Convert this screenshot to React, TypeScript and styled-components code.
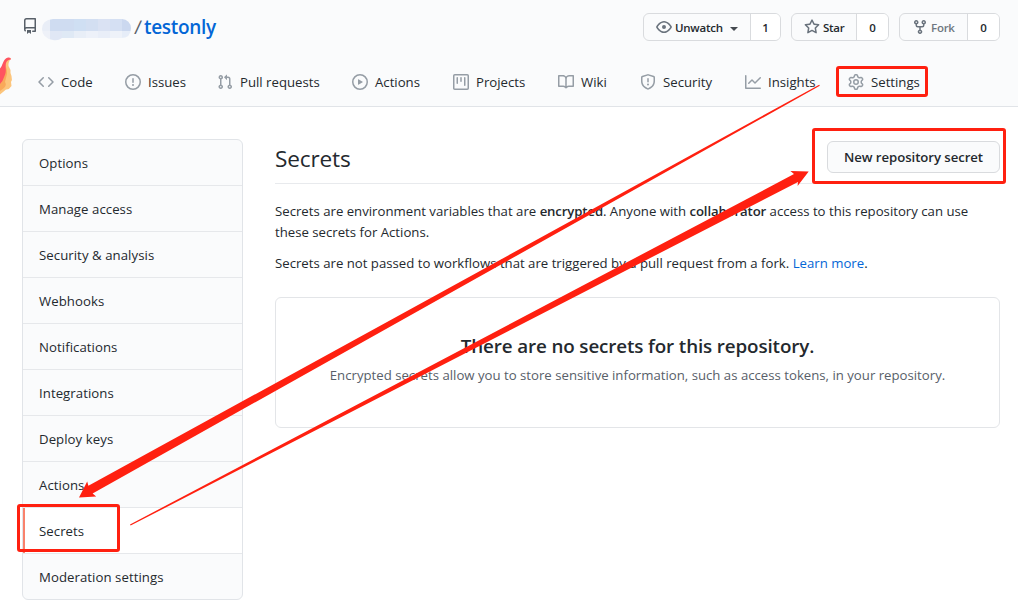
import React from "react";
import styled, { createGlobalStyle, css } from "styled-components";

const RED = "#ff2010";

const GlobalStyle = createGlobalStyle`
  * { box-sizing: border-box; }
  html, body { margin: 0; padding: 0; background: #fff; }
  body {
    font-family: "Open Sans", "Noto Sans", sans-serif;
    font-size: 13.2px;
    line-height: 21px;
    color: #24292e;
    overflow: hidden;
  }
`;

const icons = {
  repo: "M2 2.5A2.5 2.5 0 014.5 0h8.75a.75.75 0 01.75.75v12.5a.75.75 0 01-.75.75h-2.5a.75.75 0 110-1.5h1.75v-2h-8a1 1 0 00-.714 1.7.75.75 0 01-1.072 1.05A2.495 2.495 0 012 11.5v-9zm10.5-1V9h-8c-.356 0-.694.074-1 .208V2.5a1 1 0 011-1h8zM5 12.25v3.25a.25.25 0 00.4.2l1.45-1.087a.25.25 0 01.3 0L8.6 15.7a.25.25 0 00.4-.2v-3.25a.25.25 0 00-.25-.25h-3.5a.25.25 0 00-.25.25z",
  code: "M4.72 3.22a.75.75 0 011.06 1.06L2.06 8l3.72 3.72a.75.75 0 11-1.06 1.06L.47 8.53a.75.75 0 010-1.06l4.25-4.25zm6.56 0a.75.75 0 10-1.06 1.06L13.94 8l-3.72 3.72a.75.75 0 101.06 1.06l4.25-4.25a.75.75 0 000-1.06l-4.25-4.25z",
  issue: "M8 1.5a6.5 6.5 0 100 13 6.5 6.5 0 000-13zM0 8a8 8 0 1116 0A8 8 0 010 8zm9 3a1 1 0 11-2 0 1 1 0 012 0zm-.25-6.25a.75.75 0 00-1.5 0v3.5a.75.75 0 001.5 0v-3.5z",
  pull: "M7.177 3.073L9.573.677A.25.25 0 0110 .854v4.792a.25.25 0 01-.427.177L7.177 3.427a.25.25 0 010-.354zM3.75 2.5a.75.75 0 100 1.5.75.75 0 000-1.5zm-2.25.75a2.25 2.25 0 113 2.122v5.256a2.251 2.251 0 11-1.5 0V5.372A2.25 2.25 0 011.5 3.25zM11 2.5h-1V4h1a1 1 0 011 1v5.628a2.251 2.251 0 101.5 0V5A2.5 2.5 0 0011 2.5zm1 10.25a.75.75 0 111.5 0 .75.75 0 01-1.5 0zM3.75 12a.75.75 0 100 1.5.75.75 0 000-1.5z",
  play: "M1.5 8a6.5 6.5 0 1113 0 6.5 6.5 0 01-13 0zM8 0a8 8 0 100 16A8 8 0 008 0zM6.379 5.227A.25.25 0 006 5.442v5.117a.25.25 0 00.379.214l4.264-2.559a.25.25 0 000-.428L6.379 5.227z",
  project: "M1.75 0A1.75 1.75 0 000 1.75v12.5C0 15.216.784 16 1.75 16h12.5A1.75 1.75 0 0016 14.25V1.75A1.75 1.75 0 0014.25 0H1.75zM1.5 1.75a.25.25 0 01.25-.25h12.5a.25.25 0 01.25.25v12.5a.25.25 0 01-.25.25H1.75a.25.25 0 01-.25-.25V1.75zM11.75 3a.75.75 0 00-.75.75v7.5a.75.75 0 001.5 0v-7.5a.75.75 0 00-.75-.75zm-8.25.75a.75.75 0 011.5 0v5.5a.75.75 0 01-1.5 0v-5.5zM8 3a.75.75 0 00-.75.75v3.5a.75.75 0 001.5 0v-3.5A.75.75 0 008 3z",
  book: "M0 1.75A.75.75 0 01.75 1h4.253c1.227 0 2.317.59 3 1.501A3.744 3.744 0 0111.006 1h4.245a.75.75 0 01.75.75v10.5a.75.75 0 01-.75.75h-4.507a2.25 2.25 0 00-1.591.659l-.622.621a.75.75 0 01-1.06 0l-.622-.621A2.25 2.25 0 005.258 13H.75a.75.75 0 01-.75-.75V1.75zm8.755 3a2.25 2.25 0 012.25-2.25H14.5v9h-3.757c-.71 0-1.4.201-1.992.572l.004-7.322zm-1.504 7.324l.004-5.073-.002-2.253A2.25 2.25 0 005.003 2.5H1.5v9h3.757a3.75 3.75 0 011.994.574z",
  shield: "M7.467.133a1.75 1.75 0 011.066 0l5.25 1.68A1.75 1.75 0 0115 3.48V7c0 1.566-.32 3.182-1.303 4.682-.983 1.498-2.585 2.813-5.032 3.855a1.7 1.7 0 01-1.33 0c-2.447-1.042-4.049-2.357-5.032-3.855C1.32 10.182 1 8.566 1 7V3.48a1.75 1.75 0 011.217-1.667l5.25-1.68zm.61 1.429a.25.25 0 00-.153 0l-5.25 1.68a.25.25 0 00-.174.238V7c0 1.358.275 2.666 1.057 3.86.784 1.194 2.121 2.34 4.366 3.297a.2.2 0 00.154 0c2.245-.956 3.582-2.104 4.366-3.298C13.225 9.666 13.5 8.36 13.5 7V3.48a.25.25 0 00-.174-.237l-5.25-1.68zM9 10.5a1 1 0 11-2 0 1 1 0 012 0zm-.25-5.75a.75.75 0 10-1.5 0v3a.75.75 0 001.5 0v-3z",
  graph: "M1.5 1.75a.75.75 0 00-1.5 0v12.5c0 .414.336.75.75.75h14.5a.75.75 0 000-1.5H1.5V1.75zm14.28 2.53a.75.75 0 00-1.06-1.06L10 7.94 7.53 5.47a.75.75 0 00-1.06 0L3.22 8.72a.75.75 0 001.06 1.06L7 7.06l2.47 2.47a.75.75 0 001.06 0l5.25-5.25z",
  gear: "M7.429 1.525a6.593 6.593 0 011.142 0c.036.003.108.036.137.146l.289 1.105c.147.56.55.967.997 1.189.174.086.341.183.501.29.417.278.97.423 1.53.27l1.102-.303c.11-.03.175.016.195.046.219.31.41.641.573.989.014.031.022.11-.059.19l-.815.806c-.411.406-.562.957-.53 1.456a4.588 4.588 0 010 .582c-.032.499.119 1.05.53 1.456l.815.806c.08.08.073.159.059.19a6.494 6.494 0 01-.573.99c-.02.029-.086.074-.195.045l-1.103-.303c-.559-.153-1.112-.008-1.529.27-.16.107-.327.204-.5.29-.449.222-.851.628-.998 1.189l-.289 1.105c-.029.11-.101.143-.137.146a6.613 6.613 0 01-1.142 0c-.036-.003-.108-.037-.137-.146l-.289-1.105c-.147-.56-.55-.967-.997-1.189a4.502 4.502 0 01-.501-.29c-.417-.278-.97-.423-1.53-.27l-1.102.303c-.11.03-.175-.016-.195-.046a6.492 6.492 0 01-.573-.989c-.014-.031-.022-.11.059-.19l.815-.806c.411-.406.562-.957.53-1.456a4.587 4.587 0 010-.582c.032-.499-.119-1.05-.53-1.456l-.815-.806c-.08-.08-.073-.159-.059-.19a6.44 6.44 0 01.573-.99c.02-.029.086-.075.195-.045l1.103.303c.559.153 1.112.008 1.529-.27.16-.107.327-.204.5-.29.449-.222.851-.628.998-1.189l.289-1.105c.029-.11.101-.143.137-.146zM8 0c-.236 0-.47.01-.701.03-.743.065-1.29.615-1.458 1.261l-.29 1.106c-.017.066-.078.158-.211.224a5.994 5.994 0 00-.668.386c-.123.082-.233.09-.3.071L3.27 2.776c-.644-.177-1.392.02-1.82.63a7.977 7.977 0 00-.704 1.217c-.315.675-.111 1.422.363 1.891l.815.806c.05.048.098.147.088.294a6.084 6.084 0 000 .772c.01.147-.038.246-.088.294l-.815.806c-.474.469-.678 1.216-.363 1.891.2.428.436.835.704 1.218.428.609 1.176.806 1.82.63l1.103-.303c.066-.019.176-.011.299.071.213.143.436.272.668.386.133.066.194.158.212.224l.289 1.106c.169.646.715 1.196 1.458 1.26a8.094 8.094 0 001.402 0c.743-.064 1.29-.614 1.458-1.26l.29-1.106c.017-.066.078-.158.211-.224a5.98 5.98 0 00.668-.386c.123-.082.233-.09.3-.071l1.102.302c.644.177 1.392-.02 1.82-.63.268-.382.505-.789.704-1.217.315-.675.111-1.422-.364-1.891l-.814-.806c-.05-.048-.098-.147-.088-.294a6.1 6.1 0 000-.772c-.01-.147.039-.246.088-.294l.814-.806c.475-.469.679-1.216.364-1.891a7.992 7.992 0 00-.704-1.218c-.428-.609-1.176-.806-1.82-.63l-1.103.303c-.066.019-.176.011-.299-.071a5.991 5.991 0 00-.668-.386c-.133-.066-.194-.158-.212-.224L10.16 1.29C9.99.645 9.444.095 8.701.031A8.094 8.094 0 008 0zm1.5 8a1.5 1.5 0 11-3 0 1.5 1.5 0 013 0zM11 8a3 3 0 11-6 0 3 3 0 016 0z",
  eye: "M1.679 7.932c.412-.621 1.242-1.75 2.366-2.717C5.175 4.242 6.527 3.5 8 3.5c1.473 0 2.824.742 3.955 1.715 1.124.967 1.954 2.096 2.366 2.717a.119.119 0 010 .136c-.412.621-1.242 1.75-2.366 2.717C10.825 11.758 9.473 12.5 8 12.5c-1.473 0-2.824-.742-3.955-1.715C2.92 9.818 2.09 8.69 1.679 8.068a.119.119 0 010-.136zM8 2c-1.981 0-3.67.992-4.933 2.078C1.797 5.169.88 6.423.43 7.1a1.619 1.619 0 000 1.798c.45.678 1.367 1.932 2.637 3.024C4.329 13.008 6.019 14 8 14c1.981 0 3.67-.992 4.933-2.078 1.27-1.091 2.187-2.345 2.637-3.023a1.619 1.619 0 000-1.798c-.45-.678-1.367-1.932-2.637-3.023C11.671 2.992 9.981 2 8 2zm0 8a2 2 0 100-4 2 2 0 000 4z",
  star: "M8 .25a.75.75 0 01.673.418l1.882 3.815 4.21.612a.75.75 0 01.416 1.279l-3.046 2.97.719 4.192a.75.75 0 01-1.088.791L8 12.347l-3.766 1.98a.75.75 0 01-1.088-.79l.72-4.194L.818 6.374a.75.75 0 01.416-1.28l4.21-.611L7.327.668A.75.75 0 018 .25zm0 2.445L6.615 5.5a.75.75 0 01-.564.41l-3.097.45 2.24 2.184a.75.75 0 01.216.664l-.528 3.084 2.769-1.456a.75.75 0 01.698 0l2.77 1.456-.53-3.084a.75.75 0 01.216-.664l2.24-2.183-3.096-.45a.75.75 0 01-.564-.41L8 2.694v.001z",
  fork: "M5 3.25a.75.75 0 11-1.5 0 .75.75 0 011.5 0zm0 2.122a2.25 2.25 0 10-1.5 0v.878A2.25 2.25 0 005.75 8.5h1.5v2.128a2.251 2.251 0 101.5 0V8.5h1.5a2.25 2.25 0 002.25-2.25v-.878a2.25 2.25 0 10-1.5 0v.878a.75.75 0 01-.75.75h-4.5A.75.75 0 015 6.25v-.878zm3.75 7.378a.75.75 0 11-1.5 0 .75.75 0 011.5 0zm3-8.75a.75.75 0 100-1.5.75.75 0 000 1.5z",
};

type IconName = keyof typeof icons;

const IconSvg = styled.svg<{ $color: string }>`
  display: block;
  flex: none;
  width: 16px;
  height: 16px;
  fill: ${(p) => p.$color};
`;

const Icon = ({ name, color = "#959da5" }: { name: IconName; color?: string }) => (
  <IconSvg viewBox="0 0 16 16" $color={color}>
    <path fillRule="evenodd" d={icons[name]} />
  </IconSvg>
);

const Page = styled.div`
  position: relative;
  width: 1018px;
  height: 612px;
  overflow: hidden;
  background: #fff;
`;

const Header = styled.header`
  height: 107px;
  background: #fafbfc;
  border-bottom: 1px solid #e1e4e8;
`;

const TitleRow = styled.div`
  display: flex;
  justify-content: space-between;
  height: 58px;
  padding: 13px 18px 0 22px;
`;

const RepoTitle = styled.h1`
  display: flex;
  align-items: flex-start;
  margin: 0;
  padding-top: 5px;
  font-size: 19px;
  font-weight: 400;
  line-height: 19px;
`;

const MaskedOwner = styled.svg`
  display: block;
  width: 92px;
  height: 24px;
  margin: 0 0 0 4px;
`;

const Slash = styled.span`
  width: 10px;
  margin-left: -1.5px;
  margin-right: 1.5px;
  color: #586069;
  text-align: center;
  transform: skewX(-5deg);
`;

const RepoName = styled.a`
  color: #0366d6;
  font-weight: 600;
  letter-spacing: -0.3px;
`;

const Actions = styled.div`
  display: flex;
  gap: 10px;
`;

const ButtonGroup = styled.div<{ $width: number }>`
  display: flex;
  width: ${(p) => p.$width}px;
  height: 28px;
  border: 1px solid #d9dbde;
  border-radius: 6px;
  background: #fafbfc;
  overflow: hidden;
  font-size: 11.5px;
  font-weight: 600;
`;

const SocialButton = styled.div<{ $muted?: boolean }>`
  display: flex;
  flex: 1;
  align-items: center;
  gap: 3px;
  padding-left: 12px;
  color: ${(p) => (p.$muted ? "#6f7780" : "#24292e")};
  letter-spacing: -0.25px;
`;

const Count = styled.div<{ $width: number }>`
  display: flex;
  align-items: center;
  justify-content: center;
  width: ${(p) => p.$width}px;
  border-left: 1px solid #d9dbde;
  background: #fff;
`;

const Caret = styled.span`
  margin-left: 4px;
  margin-top: 3px;
  border: 4px solid transparent;
  border-top-color: #444a50;
  border-bottom: 0;
`;

const Nav = styled.nav`
  display: flex;
  height: 48px;
  padding-left: 38px;
`;

const NavItem = styled.a<{ $width: number }>`
  display: flex;
  align-items: center;
  gap: 7px;
  flex: none;
  width: ${(p) => p.$width}px;
  white-space: nowrap;
`;

const Body = styled.div`
  display: flex;
  gap: 32px;
  padding: 32px 18px 0 22px;
`;

const Menu = styled.aside`
  width: 221px;
  height: 461px;
  border: 1px solid #e1e4e8;
  border-radius: 6px;
  background: #fafbfc;
  overflow: hidden;
`;

const MenuItem = styled.a<{ $selected?: boolean }>`
  display: flex;
  align-items: center;
  height: 46px;
  padding: 1px 16px 0;
  border-bottom: 1px solid #e6e8eb;
  letter-spacing: 0.06px;
  &:last-child { border-bottom: 0; }
  ${(p) =>
    p.$selected &&
    css`
      background: #fff;
      box-shadow: inset 2px 0 0 #f9826c;
    `}
`;

const Main = styled.main`
  width: 725px;
`;

const Subhead = styled.div`
  display: flex;
  justify-content: space-between;
  align-items: flex-start;
  height: 45px;
  padding-top: 2px;
  border-bottom: 1px solid #e8eaed;
`;

const Heading = styled.h2`
  margin: 0;
  font-size: 22.6px;
  font-weight: 400;
  line-height: 36px;
  letter-spacing: -0.15px;
`;

const NewSecretButton = styled.button`
  width: 173px;
  height: 32px;
  padding: 0;
  border: 1px solid #d9dbde;
  border-radius: 6px;
  background: #fafbfc;
  color: #24292e;
  font: 600 13.2px/20px "Open Sans", "Noto Sans", sans-serif;
  letter-spacing: -0.06px;
`;

const Paragraph = styled.p<{ $top: number }>`
  margin: ${(p) => p.$top}px 0 0;
  white-space: nowrap;
  strong { font-weight: 600; letter-spacing: -0.13px; }
  a { color: #0366d6; }
`;

const BlankSlate = styled.section`
  height: 131px;
  margin-top: 23px;
  padding-top: 33px;
  border: 1px solid #e3e5e8;
  border-radius: 6px;
  text-align: center;
`;

const BlankTitle = styled.h3`
  margin: 0;
  font-size: 18.8px;
  font-weight: 600;
  line-height: 30px;
  letter-spacing: -0.12px;
`;

const BlankText = styled.p`
  margin: 4px 0 0;
  color: #586069;
`;

const Flame = styled.svg`
  position: absolute;
  left: 0;
  top: 55px;
  width: 13px;
  height: 42px;
`;

const Annotations = styled.svg`
  position: absolute;
  inset: 0;
  width: 1018px;
  height: 612px;
  pointer-events: none;
`;

const navItems: { icon: IconName; label: string; width: number }[] = [
  { icon: "code", label: "Code", width: 87 },
  { icon: "issue", label: "Issues", width: 92 },
  { icon: "pull", label: "Pull requests", width: 135 },
  { icon: "play", label: "Actions", width: 101 },
  { icon: "project", label: "Projects", width: 105 },
  { icon: "book", label: "Wiki", width: 82 },
  { icon: "shield", label: "Security", width: 105 },
  { icon: "graph", label: "Insights", width: 103 },
  { icon: "gear", label: "Settings", width: 80 },
];

const menuItems = [
  "Options",
  "Manage access",
  "Security & analysis",
  "Webhooks",
  "Notifications",
  "Integrations",
  "Deploy keys",
  "Actions",
  "Secrets",
  "Moderation settings",
];

const maskTop = ["#e9eef7", "#cfdcf1", "#cfdcf1", "#cfdff3", "#d3dff2", "#dae2f3", "#d5e0f3", "#cbd8ef", "#d0def3"];
const maskBottom = ["#eef1f8", "#e0e7f5", "#dfe9f5", "#e8eef7", "#edf1f9", "#e9eef8", "#eef2f9", "#e6edf8", "#edf2f9"];

export default function App() {
  return (
    <Page>
      <GlobalStyle />
      <Header>
        <TitleRow>
          <RepoTitle>
            <Icon name="repo" color="#586069" />
            <MaskedOwner viewBox="0 0 92 24">
              <defs>
                <clipPath id="owner">
                  <path d="M11 1H80a9 9 0 0 1 9 9q0 10-10 10H20q-4 3-9 2Q0 20 0 11T11 1Z" />
                </clipPath>
              </defs>
              <g clipPath="url(#owner)">
                {maskTop.map((c, i) => (
                  <rect key={i} x={i * 12 - 4} y={0} width={12} height={13} fill={c} />
                ))}
                {maskBottom.map((c, i) => (
                  <rect key={i} x={i * 12 - 4} y={13} width={12} height={11} fill={c} />
                ))}
              </g>
            </MaskedOwner>
            <Slash>/</Slash>
            <RepoName>testonly</RepoName>
          </RepoTitle>
          <Actions>
            <ButtonGroup $width={138}>
              <SocialButton><Icon name="eye" color="#6a737d" />Unwatch<Caret /></SocialButton>
              <Count $width={30}>1</Count>
            </ButtonGroup>
            <ButtonGroup $width={98}>
              <SocialButton><Icon name="star" color="#6a737d" />Star</SocialButton>
              <Count $width={32}>0</Count>
            </ButtonGroup>
            <ButtonGroup $width={101}>
              <SocialButton $muted><Icon name="fork" color="#6a737d" />Fork</SocialButton>
              <Count $width={32}>0</Count>
            </ButtonGroup>
          </Actions>
        </TitleRow>
        <Nav>
          {navItems.map((n) => (
            <NavItem key={n.label} $width={n.width}>
              <Icon name={n.icon} />
              <span>{n.label}</span>
            </NavItem>
          ))}
        </Nav>
      </Header>
      <Body>
        <Menu>
          {menuItems.map((m) => (
            <MenuItem key={m} $selected={m === "Secrets"}>{m}</MenuItem>
          ))}
        </Menu>
        <Main>
          <Subhead>
            <Heading>Secrets</Heading>
            <NewSecretButton>New repository secret</NewSecretButton>
          </Subhead>
          <Paragraph $top={17}>
            Secrets are environment variables that are <strong>encrypted</strong>. Anyone with <strong>collaborator</strong> access to this repository can use<br />
            these secrets for Actions.
          </Paragraph>
          <Paragraph $top={10}>
            Secrets are not passed to workflows that are triggered by a pull request from a fork. <a>Learn more</a>.
          </Paragraph>
          <BlankSlate>
            <BlankTitle>There are no secrets for this repository.</BlankTitle>
            <BlankText>Encrypted secrets allow you to store sensitive information, such as access tokens, in your repository.</BlankText>
          </BlankSlate>
        </Main>
      </Body>
      <Flame viewBox="0 0 13 42">
        <path d="M0 16C3 12 3 4 8 3L11 3.500Q8 7 8.500 11L10.500 15Q10 18 11.500 21Q12.500 25 11 27L11.500 31Q9 35 6 34.500L3 37 0 39.500Z" fill="#fcc57c" />
        <path d="M0 22C3 20 5 16 6 12Q8 18 6 23L5 27Q7 30 4 33L0 36Z" fill="#f9a95a" />
        <path d="M0 13.500C3 11 2.500 4 8 2.500Q11 2 11 4.500Q7 4.500 6 8C5 12 7 16 4.500 21Q3 26 0 29Z" fill="#ff5460" />
      </Flame>
      <Annotations viewBox="0 0 1018 612">
        <g fill="none" stroke={RED} strokeWidth="3" strokeLinejoin="round">
          <rect x="837.500" y="67.500" width="89" height="28" rx="1.500" />
          <rect x="813.500" y="129.500" width="191" height="53" rx="1.500" />
          <rect x="18.500" y="505.500" width="100" height="45" rx="1.500" />
        </g>
        <g fill={RED}>
          <path d="M819.800 85.800 92.600 493.400 96.200 496.600 79 497.500 87.200 481.500 88.400 485.800 819.200 84.700Z" />
          <path d="M130 524.500 794 174.100 790.400 171 808.700 171.500 797.600 186 798 181.900 130.600 525.600Z" />
        </g>
      </Annotations>
    </Page>
  );
}
